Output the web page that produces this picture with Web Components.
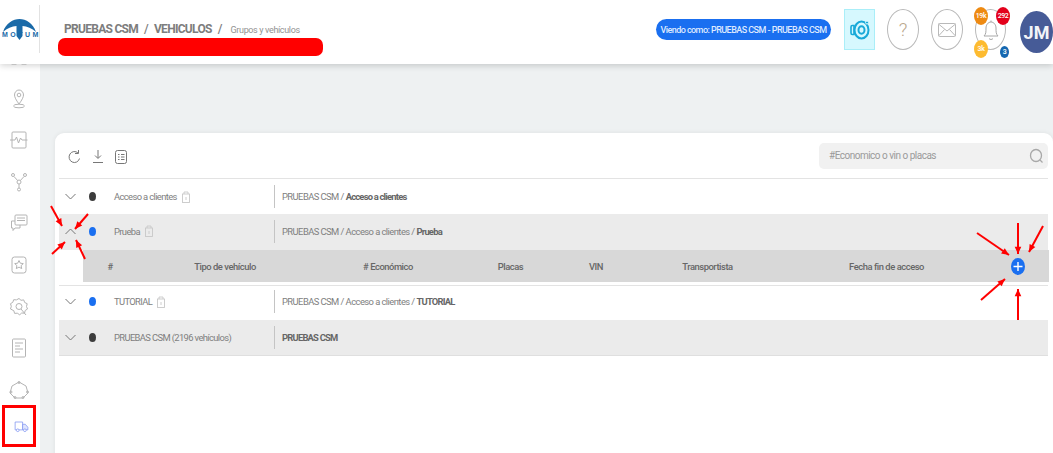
<!DOCTYPE html>
<html><head><meta charset="utf-8">
<style>
html,body{margin:0;padding:0;width:1053px;height:453px;overflow:hidden;background:#fff;font-family:Roboto,"Liberation Sans",sans-serif;}
</style></head>
<body>
<motum-app>
  <top-bar slot="top"></top-bar>
  <side-nav slot="side"></side-nav>
  <groups-card slot="main">
    <group-row dot="#3c3c3c" name="Acceso a clientes" lock path="PRUEBAS CSM / " leaf="Acceso a clientes"></group-row>
    <group-row shade expanded dot="#1a6ff0" name="Prueba" lock path="PRUEBAS CSM / Acceso a clientes / " leaf="Prueba"></group-row>
    <vehicle-head></vehicle-head>
    <group-row top-line dot="#1a6ff0" name="TUTORIAL" lock path="PRUEBAS CSM / Acceso a clientes / " leaf="TUTORIAL"></group-row>
    <group-row shade bottom-line dot="#3c3c3c" name="PRUEBAS CSM (2196 vehículos)" path="" leaf="PRUEBAS CSM"></group-row>
  </groups-card>
  <red-marks slot="over"></red-marks>
</motum-app>
<script>
const def=(n,html,extra)=>{customElements.define(n,class extends HTMLElement{
  constructor(){super();this.attachShadow({mode:'open'}).innerHTML=html;}
  connectedCallback(){extra&&extra.call(this,this.shadowRoot)}
})};

def('motum-app',`<style>
:host{display:grid;grid-template-columns:40px 1fr;grid-template-rows:64px 389px;width:1053px;height:453px;position:relative;overflow:hidden}
.top{grid-column:1/3;grid-row:1;position:relative;z-index:2}
.side{grid-column:1;grid-row:2;overflow:hidden;background:#fff;position:relative;z-index:1}
.main{grid-column:2;grid-row:2;background:#eef1f2;padding:69px 0 0 15px;overflow:hidden}
</style>
<div class="top"><slot name="top"></slot></div>
<div class="side"><slot name="side"></slot></div>
<div class="main"><slot name="main"></slot></div>
<slot name="over"></slot>`);

def('top-bar',`<style>
:host{display:flex;height:64px;background:#fff;box-shadow:0 2px 6px rgba(0,0,0,.16);align-items:stretch;color:#7d7d7d}
.logo{width:39px;height:48px;margin-top:5px;border-right:1px solid #e2e2e2;flex:none;position:relative}
.logo svg{display:block;margin:14px 0 0 3px}
.logo b{position:absolute;top:26px;left:0;width:38px;text-align:center;font:700 7px "Liberation Sans",sans-serif;color:#1a6aa8;letter-spacing:2.450px;white-space:nowrap;text-indent:2px}
.crumb{flex:1;padding:22px 0 0 24px;display:flex;flex-direction:column}
.t{font-size:12px;font-weight:700;line-height:14px;white-space:nowrap;letter-spacing:-.72px;display:flex;align-items:baseline}
.t .s{margin:0 6px;font-weight:500}
.t small{font-size:9px;font-weight:400;letter-spacing:-.36px;margin-left:3px;color:#929292}
.red{margin:1px 0 0 -6px;width:265px;height:18px;border-radius:7px;background:#ff0000}
.r{display:flex;align-items:flex-start;padding-top:9px}
.pill{margin-top:10px;width:175px;height:21px;box-sizing:border-box;border-radius:11px;background:#1a6ff0;color:#dfeaff;font-size:9px;font-weight:500;letter-spacing:-.55px;display:flex;align-items:center;justify-content:center;white-space:nowrap;margin-right:13px}
.cam{width:31px;height:41px;box-sizing:border-box;background:#d6f8fe;border:1px solid #aaeef8;display:flex;align-items:center;justify-content:center;margin-right:12px}
.c{width:32px;height:41px;box-sizing:border-box;border:1px solid #b9b9b9;border-radius:50%;display:flex;align-items:center;justify-content:center;margin-right:12px;color:#b9a78c;font-size:19px;font-weight:300}
.bell{position:relative;margin-right:14px;width:31px}
.bd{position:absolute;border-radius:50%;display:flex;align-items:center;justify-content:center;color:#fff;font-size:7px;font-weight:500;letter-spacing:-.4px;width:14px;height:18px}
.av{width:33px;height:42px;margin-top:2px;border-radius:50%;background:#465b97;color:#f2f4f8;font-size:18px;font-weight:700;display:flex;align-items:center;justify-content:center}
</style>
<div class="logo">
  <svg width="33" height="21" viewBox="0 0 33 21"><path d="M0 13C3 4 10 0 16.500 0S30 4 33 13C29 9 24 7.500 19.500 7V17l-3 4-3-4V7C9 7.500 4 9 0 13Z" fill="#1a6aa8"/></svg>
  <b>MOTUM</b>
</div>
<div class="crumb">
  <div class="t">PRUEBAS CSM<span class="s">/</span>VEHICULOS<span class="s">/</span><small>Grupos y vehículos</small></div>
  <div class="red"></div>
</div>
<div class="r">
  <div class="pill">Viendo como: PRUEBAS CSM - PRUEBAS CSM</div>
  <div class="cam"><svg width="22" height="24" viewBox="0 0 22 24" fill="none" stroke="#18a9d8"><path d="M5 7.500H3.200Q2 7.500 2 9v6q0 1.500 1.200 1.500H5Z" stroke-width="1.600"/><ellipse cx="12.500" cy="12" rx="7" ry="8.500" stroke-width="2"/><ellipse cx="12.500" cy="12" rx="3" ry="3.800" stroke-width="2"/><circle cx="18" cy="4.500" r="1.500" fill="#18a9d8" stroke="#d6f8fe"/></svg></div>
  <div class="c">?</div>
  <div class="c"><svg width="20" height="16" viewBox="0 0 20 16" fill="none" stroke="#b9b9b9"><rect x="1.500" y="1.500" width="17" height="13" rx="1"/><path d="M1.500 2l8.500 7 8.500-7M1.500 14l6-6.500M18.500 14l-6-6.500"/></svg></div>
  <div class="bell">
    <div class="c" style="width:31px;margin:0"><svg width="16" height="22" viewBox="0 0 16 22" fill="none" stroke="#a8a8a8"><path d="M1 17c2-2 2-4 2-8 0-3 2-6 5-6s5 3 5 6c0 4 0 6 2 8Z"/><path d="M6 19.500c1 1.300 3 1.300 4 0M8 3V1.500"/></svg></div>
    <div class="bd" style="left:-1px;top:-2px;background:#ee8a12">19k</div>
    <div class="bd" style="left:21px;top:-2px;background:#e3001b">292</div>
    <div class="bd" style="left:-1px;top:31px;background:#fdbb30">3k</div>
    <div class="bd" style="left:25px;top:37px;background:#1567b0;width:9px;height:12px">3</div>
  </div>
  <div class="av">JM</div>
</div>`);

const icons=[
 '<rect x="3" y="2" width="6" height="6" rx="1"/><rect x="13" y="2" width="6" height="6" rx="1"/><rect x="3" y="12" width="6" height="6" rx="1"/><rect x="13" y="12" width="6" height="6" rx="1"/>',
 '<path d="M11 16C8 12 6.500 9 6.500 7a4.500 5 0 0 1 9 0c0 2-1.500 5-4.500 9Z"/><circle cx="11" cy="7" r="1.800"/><ellipse cx="11" cy="18" rx="5.500" ry="1.800"/>',
 '<rect x="4" y="3" width="14" height="16" rx="1"/><path d="M2 11h5l1.500-3 2 6 2-5 1.500 2h5.500"/>',
 '<circle cx="5" cy="4" r="1.500"/><circle cx="17" cy="4" r="1.500"/><circle cx="11" cy="18.500" r="1.500"/><circle cx="11" cy="11" r="2"/><path d="M6 5.500l3.600 4M16 5.500l-3.600 4M11 13v4"/>',
 '<rect x="7" y="3" width="12" height="10" rx="1"/><path d="M9 6h8M9 8.500h8"/><path d="M7 9H3.500v7H5l0 2.500 2-2.500h5v-3"/>',
 '<rect x="4" y="3" width="14" height="16" rx="2.500"/><path d="M11 6.500l1.300 2.700 3 .4-2.200 2 .6 3-2.700-1.500-2.700 1.500.6-3-2.200-2 3-.4Z"/>',
 '<path d="M11 2.500l2 1.800 2.700-.4 1 2.600 2.500 1.200-.7 2.800 1 2.500-2.300 1.500-.7 2.700-2.800-.2-2 1.800-2.400-1.600-2.700.2-.8-2.700L2.500 13l.8-2.700-.8-2.600 2.300-1.400.9-2.600 2.700.2Z"/><circle cx="11" cy="10.500" r="3"/><path d="M13 13l5 6"/>',
 '<rect x="4.500" y="2" width="13" height="18" rx="1"/><path d="M7 6h8M7 9h5M7 12h8M7 15h5"/>',
 '<path d="M11 3l7 4 2 7-5 5H7l-5-5 2-7Z"/><circle cx="11" cy="3.500" r="1"/><circle cx="19.500" cy="13" r="1"/><circle cx="3" cy="13" r="1"/><circle cx="7" cy="18.500" r="1"/><circle cx="15" cy="18.500" r="1"/>',
];
def('side-nav',`<style>
:host{display:flex;flex-direction:column;align-items:center;margin-top:-18px;width:40px;gap:19.600px}
svg{display:block;fill:none;stroke:#b4b4b4;stroke-width:1;margin-left:-2px;flex:none}
svg.on{stroke:#7f94f2}
</style>${icons.map(p=>`<svg width="22" height="22" viewBox="0 0 22 22">${p}</svg>`).join('')}
<svg class="on" width="15" height="13" viewBox="0 0 20 16" style="margin-top:0;margin-left:2px"><path d="M1.500 2h10v10.500h-10Z"/><path d="M11.500 5H15l3.500 4v3.500h-7Z" fill="#dfe5fd"/><circle cx="5" cy="13" r="1.800" fill="#fff"/><circle cx="14.500" cy="13" r="1.800" fill="#fff"/></svg>`);

def('groups-card',`<style>
:host{display:block;width:998px;height:330px;background:#fff;border-radius:9px 9px 0 0;box-shadow:0 0 5px rgba(0,0,0,.07);box-sizing:border-box;padding:0 5px 0 4px;color:#7a7a7a}
.bar{height:45px;display:flex;align-items:center;border-bottom:1px solid #e3e3e3}
.bar svg{display:block;fill:none;stroke:#777;stroke-width:1}
.tools{display:flex;align-items:center;gap:11px;padding-left:9px;flex:1;margin-top:2px}
.search{width:229px;height:26px;background:#f1f1f1;border-radius:5px;display:flex;align-items:center;justify-content:space-between;font-size:10px;letter-spacing:-.5px;color:#9a9a9a;padding:0 4px 0 10px;box-sizing:border-box;margin-top:0}
</style>
<div class="bar">
  <div class="tools">
    <svg width="13" height="15" viewBox="0 0 13 15"><path d="M11.500 9.500A5.300 5.500 0 1 1 10 4"/><path d="M10.500 1v3.500H7"/></svg>
    <svg width="12" height="15" viewBox="0 0 12 15"><path d="M6 1v8M3 6.500L6 9.500 9 6.500M1 13.500h10"/></svg>
    <svg width="12" height="14" viewBox="0 0 12 14"><rect x=".5" y=".5" width="11" height="13" rx="2"/><path d="M3 4.500h1.500M6 4.500h3.500M3 7h1.500M6 7h3.500M3 9.500h1.500M6 9.500h3.500"/></svg>
  </div>
  <div class="search"><span>#Economico o vin o placas</span><svg width="15" height="16" viewBox="0 0 15 16" style="stroke:#a8a8a8;stroke-width:1.300"><ellipse cx="7" cy="7.500" rx="5.500" ry="6"/><path d="M11 12l2.500 2.500"/></svg></div>
</div>
<slot></slot>`);

def('group-row',`<style>
:host{display:flex;align-items:center;height:35px;font-size:9.400px;letter-spacing:-.55px;color:#7e7e7e;box-sizing:border-box;white-space:nowrap}
:host([shade]){background:#ebebeb}
:host([expanded]){height:36px;padding-bottom:2px}
:host([top-line]){border-top:1px solid #e3e3e3;height:35px;margin-top:3px;padding-bottom:3px}
:host([bottom-line]){border-bottom:1px solid #dfdfdf;height:36px}
.ch{width:22px;padding-left:6px;flex:none}
.ch svg{display:block;fill:none;stroke:#777;stroke-width:1}
.dot{width:7px;height:9px;border-radius:50%;flex:none;margin-left:2px}
.name{width:160px;margin-left:18px;display:flex;align-items:center;gap:5px;flex:none;letter-spacing:-.62px}
.name svg{fill:none;stroke:#c8c8c8;stroke-width:.9;display:block}
.path{border-left:1px solid #c4c4c4;height:23px;display:flex;align-items:center;padding-left:7px;white-space:pre}
.path b{font-weight:700;color:#666;letter-spacing:-.78px}
</style>
<div class="ch"><svg width="11" height="7" viewBox="0 0 11 7"><path class="p" d="M.5 1L5.500 6 10.500 1"/></svg></div>
<div class="dot"></div>
<div class="name"><span class="n"></span></div>
<div class="path"><span class="q"></span><b></b></div>`,function(s){
  s.querySelector('.dot').style.background=this.getAttribute('dot');
  s.querySelector('.n').textContent=this.getAttribute('name');
  s.querySelector('.q').textContent=this.getAttribute('path');
  s.querySelector('b').textContent=this.getAttribute('leaf');
  if(this.hasAttribute('expanded'))s.querySelector('.p').setAttribute('d','M.5 6L5.500 1 10.500 6');
  if(this.hasAttribute('lock')){s.querySelector('.name').insertAdjacentHTML('beforeend','<svg width="8" height="12" viewBox="0 0 8 12"><rect x=".5" y="3" width="7" height="8.500"/><path d="M2 3V1h4v2M4 6v3"/></svg>');}
});

def('vehicle-head',`<style>
:host{display:grid;grid-template-columns:54px 176px 150px 95px 76px 147px 211px 1fr;align-items:center;height:32px;margin-left:24px;width:966px;background:#d8d8d8;font-size:9.400px;font-weight:500;letter-spacing:-.45px;color:#666;white-space:nowrap}
span{text-align:center}
.add{width:14px;height:17px;border-radius:50%;background:#1a6ff0;display:flex;align-items:center;justify-content:center;margin:0 0 0 19px}
</style>
<span>#</span><span>Tipo de vehículo</span><span># Económico</span><span>Placas</span><span>VIN</span><span>Transportista</span><span>Fecha fin de acceso</span>
<div class="add"><svg width="10" height="11" viewBox="0 0 10 11" fill="none" stroke="#fff" stroke-width="1.400"><path d="M5 1v9M.5 5.500h9"/></svg></div>`);

const arrow=(x1,y1,x2,y2)=>{const a=Math.atan2(y2-y1,x2-x1),l=8,w=.42;
 const p=(s)=>`${(x2-l*Math.cos(a+s*w)).toFixed(1)},${(y2-l*Math.sin(a+s*w)).toFixed(1)}`;
 return `<path d="M${x1} ${y1}L${x2} ${y2}" stroke="#f00" stroke-width="2"/><polygon points="${x2},${y2} ${p(1)} ${p(-1)}" fill="#f00"/>`};
def('red-marks',`<style>
:host{position:absolute;left:0;top:0;width:1053px;height:453px;pointer-events:none;z-index:5}
svg{display:block}
</style><svg width="1053" height="453" viewBox="0 0 1053 453">
<rect x="3.500" y="406.500" width="31" height="39" fill="none" stroke="#f00" stroke-width="3"/>
${[[51,206,62,226],[88,214,75,229],[52,254,65,242],[85,259,76,240],
   [977,233,1009,255],[1018,223,1018,254],[1043,226,1029,252],[981,300,1005,279],[1018,320,1018,289]].map(a=>arrow(...a)).join('')}
</svg>`);
</script>
</body></html>
